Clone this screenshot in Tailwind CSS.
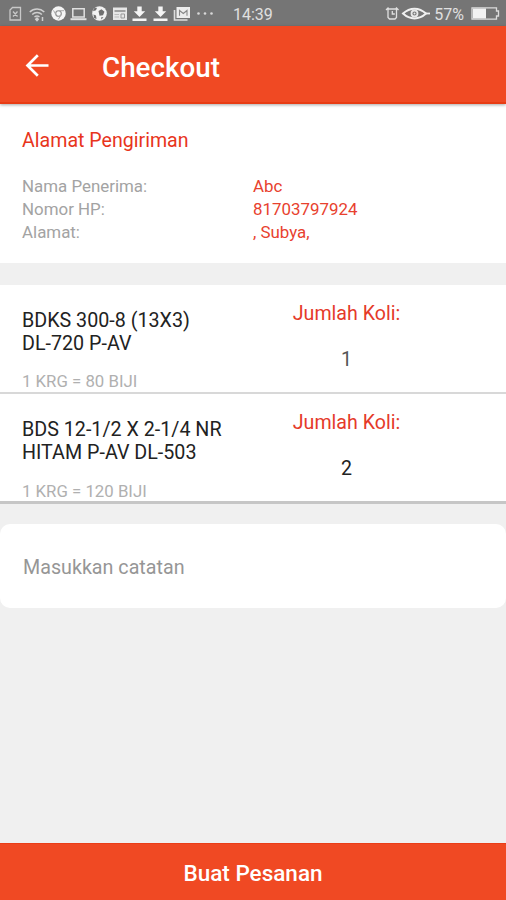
<!DOCTYPE html>
<html lang="id">
  <head>
    <meta charset="UTF-8" />
    <meta name="viewport" content="width=device-width, initial-scale=1.0" />
    <title>Checkout</title>
    <script src="https://cdn.jsdelivr.net/npm/@tailwindcss/browser@4"></script>
  </head>

  <body class="bg-[#f0f0f0] font-['Roboto',sans-serif] text-[#222]">
    <div class="flex h-[900px] w-[506px] flex-col overflow-hidden">
      <!-- Status bar -->
      <div class="flex h-[26px] shrink-0 items-center bg-[#757575] pt-px pr-[6px] pl-[8px] text-[#e6e6e6]">
        <div class="flex w-[225px] items-center">
          <svg class="h-[18px] w-[208px]" viewBox="0 0 208 18" fill="none" stroke="currentColor" stroke-width="1.3">
            <!-- no sim -->
            <path d="M4.5 2.500h8v12.500h-10.500v-10z M5 6.500l4.500 5 M9.500 6.500l-4.500 5" stroke="#c8c8c8" />
            <!-- wifi -->
            <g stroke="#cfcfcf" stroke-width="1.500">
              <path d="M21.800 7a10.500 10.500 0 0 1 14.500 0 M24.200 9.500a7 7 0 0 1 9.700 0 M26.500 12a4 4 0 0 1 5 0" />
              <path d="M29 13l1.200 1.300-1.200 1.300-1.200-1.300z" fill="#cfcfcf" />
              <path d="M34.500 12v4" />
            </g>
            <!-- chrome -->
            <circle cx="50.500" cy="8.500" r="7.200" fill="#f5f5f5" stroke="none" />
            <circle cx="50.500" cy="8.500" r="2.800" stroke="#8c8c8c" stroke-width="1.100" />
            <path d="M50.500 5.700h5.500 M48 9.900l-2.500-4.500 M53 9.900l-2.700 4.500" stroke="#aaa" stroke-width="1" />
            <!-- laptop -->
            <path d="M64.800 3.700h11.400v8.300h-11.400z" stroke="#e0e0e0" stroke-width="1.500" />
            <path d="M62.500 14.200h16" stroke="#e0e0e0" stroke-width="2" />
            <!-- ball -->
            <circle cx="91.500" cy="8.500" r="7.300" fill="#f2f2f2" stroke="none" />
            <path d="M90.500 6l3-1.800 3 2.500-1.500 3.500-3.500.5z M86 3.200l3-.5-1 2.500-3 1z M85.500 9.500l2.500 1 .5 3.500-2.500-1z M93 12.500l2.500-.5-2 2.500z" fill="#6f6f6f" stroke="none" />
            <!-- news -->
            <path d="M105 2.500h14v12.500h-14z" fill="#e6e6e6" stroke="none" />
            <path d="M106.500 6h11" stroke="#888" stroke-width="1.500" />
            <path d="M106.500 9.500h4.500 M106.500 12h4.500" stroke="#bbb" stroke-width="1" />
            <path d="M113 9h3.500v4h-3.500z" stroke="#999" stroke-width="1" />
            <!-- downloads -->
            <g fill="#f5f5f5" stroke="none">
              <path d="M129.300 1.500h4.400v4.800h3.500l-5.700 5.700-5.700-5.700h3.500z M124.500 13.500h14v2.500h-14z" />
              <path d="M150.300 1.500h4.400v4.800h3.500l-5.700 5.700-5.700-5.700h3.500z M145.500 13.500h14v2.500h-14z" />
            </g>
            <!-- mails -->
            <path d="M166.500 5v10h13" stroke="#ddd" stroke-width="1.600" />
            <path d="M168.500 2h13.500v11h-13.500z" fill="#ededed" stroke="none" />
            <path d="M171.500 10.800v-5.300l3.800 3 3.700-3v5.300" stroke="#888" stroke-width="1.100" />
            <!-- more -->
            <g fill="#d8d8d8" stroke="none">
              <circle cx="190.500" cy="8.500" r="1.300" />
              <circle cx="197" cy="8.500" r="1.300" />
              <circle cx="203.500" cy="8.500" r="1.300" />
            </g>
          </svg>
        </div>
        <span class="pt-px text-[16px] leading-[25px] text-[#e0e0e0]">14:39</span>
        <div class="ml-auto flex items-center">
          <svg class="h-[18px] w-[50px]" viewBox="0 0 50 18" fill="none" stroke="#e0e0e0" stroke-width="1.300">
            <!-- alarm -->
            <path d="M4 4h8.500v8.500l-1.500 1.500h-5.500l-1.500-1.500z M8.300 6v3h2.500 M2 5l2.500-2.500 M12 2.500l2.500 2.500" />
            <!-- eye -->
            <path d="M19 8.500c7-6.500 16-6.500 23 0c-7 6.500-16 6.500-23 0z" stroke="#f0f0f0" stroke-width="2" />
            <path d="M41 8.500h5" stroke="#f0f0f0" stroke-width="1.800" />
            <circle cx="30.500" cy="8.500" r="3" stroke="#e8e8e8" stroke-width="1.800" />
            <circle cx="30.500" cy="8.500" r="1" fill="#e8e8e8" stroke="none" />
          </svg>
          <span class="pt-px text-[16px] leading-[25px] text-[#e0e0e0]">57%</span>
          <svg class="ml-[7px] h-[14px] w-[29px]" viewBox="0 0 29 14" fill="none">
            <path d="M1 .8h24.500v3.200h2v5h-2v3.200h-24.500z" stroke="#dcdcdc" stroke-width="1.300" />
            <path d="M2 1.500h13v10h-13z" fill="#f2f2f2" />
          </svg>
        </div>
      </div>

      <!-- App bar -->
      <header class="z-10 flex h-[78px] shrink-0 items-center border-b-2 border-[#e83c14] bg-[#f04923] pt-[3px] pl-[25px] text-white shadow-[0_1px_3px_rgba(0,0,0,0.35)]">
        <svg class="h-[24px] w-[24px]" viewBox="0 0 24 24" fill="none" stroke="currentColor" stroke-width="2.700">
          <path d="M23.500 11.500h-20.500 M12.800 1.200l-10.300 10.300 10.300 10.300" />
        </svg>
        <h1 class="ml-[53px] pt-[4px] text-[27.8px] font-medium">Checkout</h1>
      </header>

      <!-- Shipping address -->
      <section class="h-[159px] shrink-0 bg-white px-[22px] pt-[24px]">
        <h2 class="text-[19.6px] leading-[26px] text-[#e8351c]">Alamat Pengiriman</h2>
        <div class="mt-[21px] grid grid-cols-[231px_1fr] text-[16.9px] leading-[23px] text-[#a3a3a3]">
          <span>Nama Penerima:</span>
          <span class="text-[#e8412e]">Abc</span>
          <span>Nomor HP:</span>
          <span class="text-[#e8412e]">81703797924</span>
          <span>Alamat:</span>
          <span class="text-[#e8412e]">, Subya,</span>
        </div>
      </section>

      <!-- Items -->
      <section class="mt-[22px] shrink-0">
        <div class="flex h-[109px] border-b-2 border-[#d8d8d8] bg-white pl-[22px]">
          <div class="w-[231px] pt-[24px]">
            <p class="text-[19.7px] leading-[23px]">BDKS 300-8 (13X3)<br />DL-720 P-AV</p>
            <p class="mt-[15px] text-[16.8px] leading-[23px] text-[#b0b0b0]">1 KRG = 80 BIJI</p>
          </div>
          <div class="w-[187px] pt-[16px] text-center text-[19.6px] leading-[26px]">
            <p class="text-[#e53a2a]">Jumlah Koli:</p>
            <p class="mt-[20px] text-[#555]">1</p>
          </div>
        </div>
        <div class="flex h-[110px] border-b-3 border-[#c6c6c6] bg-white pl-[22px]">
          <div class="w-[231px] pt-[24px]">
            <p class="text-[19.7px] leading-[23px]">BDS 12-1/2 X 2-1/4 NR<br />HITAM P-AV DL-503</p>
            <p class="mt-[16px] text-[16.8px] leading-[23px] text-[#b0b0b0]">1 KRG = 120 BIJI</p>
          </div>
          <div class="w-[187px] pt-[16px] text-center text-[19.6px] leading-[26px]">
            <p class="text-[#e53a2a]">Jumlah Koli:</p>
            <p class="mt-[20px]">2</p>
          </div>
        </div>
      </section>

      <!-- Note -->
      <div class="mt-[20px] flex h-[84px] shrink-0 items-center rounded-[10px] bg-white px-[23px] pt-[4px] text-[19.7px] text-[#969696]">Masukkan catatan</div>

      <button class="mt-auto h-[57px] shrink-0 border-t border-[#ea3d17] bg-[#f04923] pt-[3px] text-[22.5px] font-medium text-white">Buat Pesanan</button>
    </div>
  </body>
</html>
